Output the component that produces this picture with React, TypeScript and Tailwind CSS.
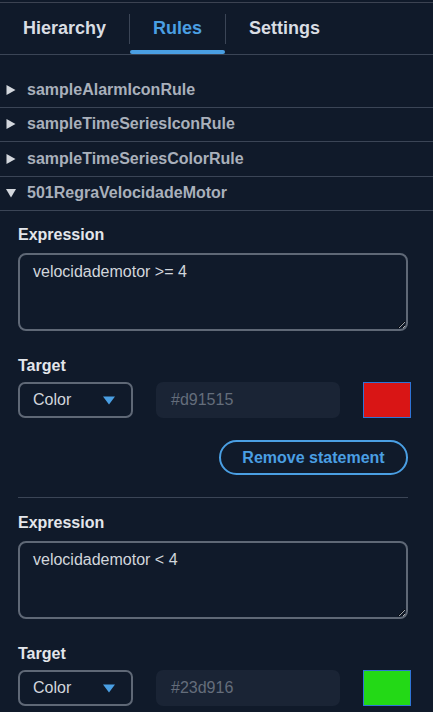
import React from "react";

const rules = [
  { name: "sampleAlarmIconRule", open: false },
  { name: "sampleTimeSeriesIconRule", open: false },
  { name: "sampleTimeSeriesColorRule", open: false },
  { name: "501RegraVelocidadeMotor", open: true },
];

const statements = [
  { expression: "velocidademotor >= 4", color: "#d91515" },
  { expression: "velocidademotor < 4", color: "#23d916" },
];

function Caret({ open }: { open: boolean }) {
  return open ? (
    <svg width="10" height="10" viewBox="0 0 10 10" className="shrink-0">
      <polygon points="0,1 10,1 5,9.5" fill="#d3d7dd" />
    </svg>
  ) : (
    <svg width="10" height="10" viewBox="0 0 10 10" className="shrink-0">
      <polygon points="0.5,0 9.5,5 0.5,10" fill="#d3d7dd" />
    </svg>
  );
}

function Statement({ expression, color }: { expression: string; color: string }) {
  return (
    <div className="flex flex-col">
      <label className="text-[16px] leading-[18px] font-bold text-[#e3e6eb]">Expression</label>
      <textarea
        defaultValue={expression}
        className="mt-[9px] h-[78px] w-[390px] rounded-[8px] border-2 border-[#5f6876] bg-transparent px-[13px] pt-[7px] text-[16px] leading-[20px] text-[#d2d6dc] outline-none"
      />
      <label className="mt-[26px] text-[16px] leading-[18px] font-bold text-[#e3e6eb]">Target</label>
      <div className="mt-[7px] flex items-center">
        <div className="flex h-[36px] w-[115px] items-center justify-between rounded-[7px] border-2 border-[#5f6876] pl-[13px] pr-[16px] text-[16px] text-[#d2d6dc]">
          <span>Color</span>
          <svg width="12" height="9" viewBox="0 0 12 9">
            <polygon points="0,0.5 12,0.5 6,8.5" fill="#4a9fe3" />
          </svg>
        </div>
        <div className="ml-[23px] flex h-[36px] w-[184px] items-center rounded-[7px] bg-[#1a2435] pl-[15px] text-[16px] text-[#646d7b]">
          {color}
        </div>
        <div
          className="ml-[23px] h-[36px] w-[48px] border border-[#2f74d6]"
          style={{ backgroundColor: color }}
        />
      </div>
      <div className="mt-[22px] flex w-[390px] justify-end">
        <button className="h-[35px] w-[189px] rounded-full border-2 border-[#4a9fe3] text-[16px] font-bold text-[#4a9fe3]">
          Remove statement
        </button>
      </div>
      <div className="mt-[22px] h-px w-[390px] bg-[#3b4556]" />
    </div>
  );
}

export default function App() {
  return (
    <div
      className="h-[712px] w-[433px] bg-[#101a2a] pt-[2px]"
      style={{ fontFamily: '"Liberation Sans", Arial, sans-serif' }}
    >
      <div className="h-[710px] overflow-y-scroll border-t border-[#3c4352] [&::-webkit-scrollbar]:w-[6px] [&::-webkit-scrollbar-track]:bg-[#2b2b2b] [&::-webkit-scrollbar-thumb]:border-l-[4px] [&::-webkit-scrollbar-thumb]:border-solid [&::-webkit-scrollbar-thumb]:border-[#2b2b2b] [&::-webkit-scrollbar-thumb]:bg-[#a0a0a0]">
        <div className="flex border-b border-[#3b4556]">
          <button className="flex h-[51px] items-center px-[23px] text-[18px] font-bold text-[#d9dde3]">
            Hierarchy
          </button>
          <div className="h-[30px] w-px self-center bg-[#3b4556]" />
          <button className="relative flex h-[51px] items-center px-[23px] text-[18px] font-bold text-[#4a9fe3]">
            Rules
            <span className="absolute bottom-0 left-0 right-0 h-[4px] rounded-full bg-[#4a9fe3]" />
          </button>
          <div className="h-[30px] w-px self-center bg-[#3b4556]" />
          <button className="flex h-[51px] items-center px-[23px] text-[18px] font-bold text-[#d9dde3]">
            Settings
          </button>
        </div>

        <div className="pt-[18px]">
          {rules.map((rule) => (
            <div
              key={rule.name}
              className="flex h-[34.5px] items-center gap-[11px] border-b border-[#3b4556] pl-[6px]"
            >
              <Caret open={rule.open} />
              <span className="text-[16px] font-bold text-[#a9b0bb]">{rule.name}</span>
            </div>
          ))}
        </div>

        <div className="flex flex-col gap-[16px] pl-[18px] pt-[15px] pb-[64px]">
          {statements.map((s) => (
            <Statement key={s.expression} expression={s.expression} color={s.color} />
          ))}
        </div>
      </div>
    </div>
  );
}
